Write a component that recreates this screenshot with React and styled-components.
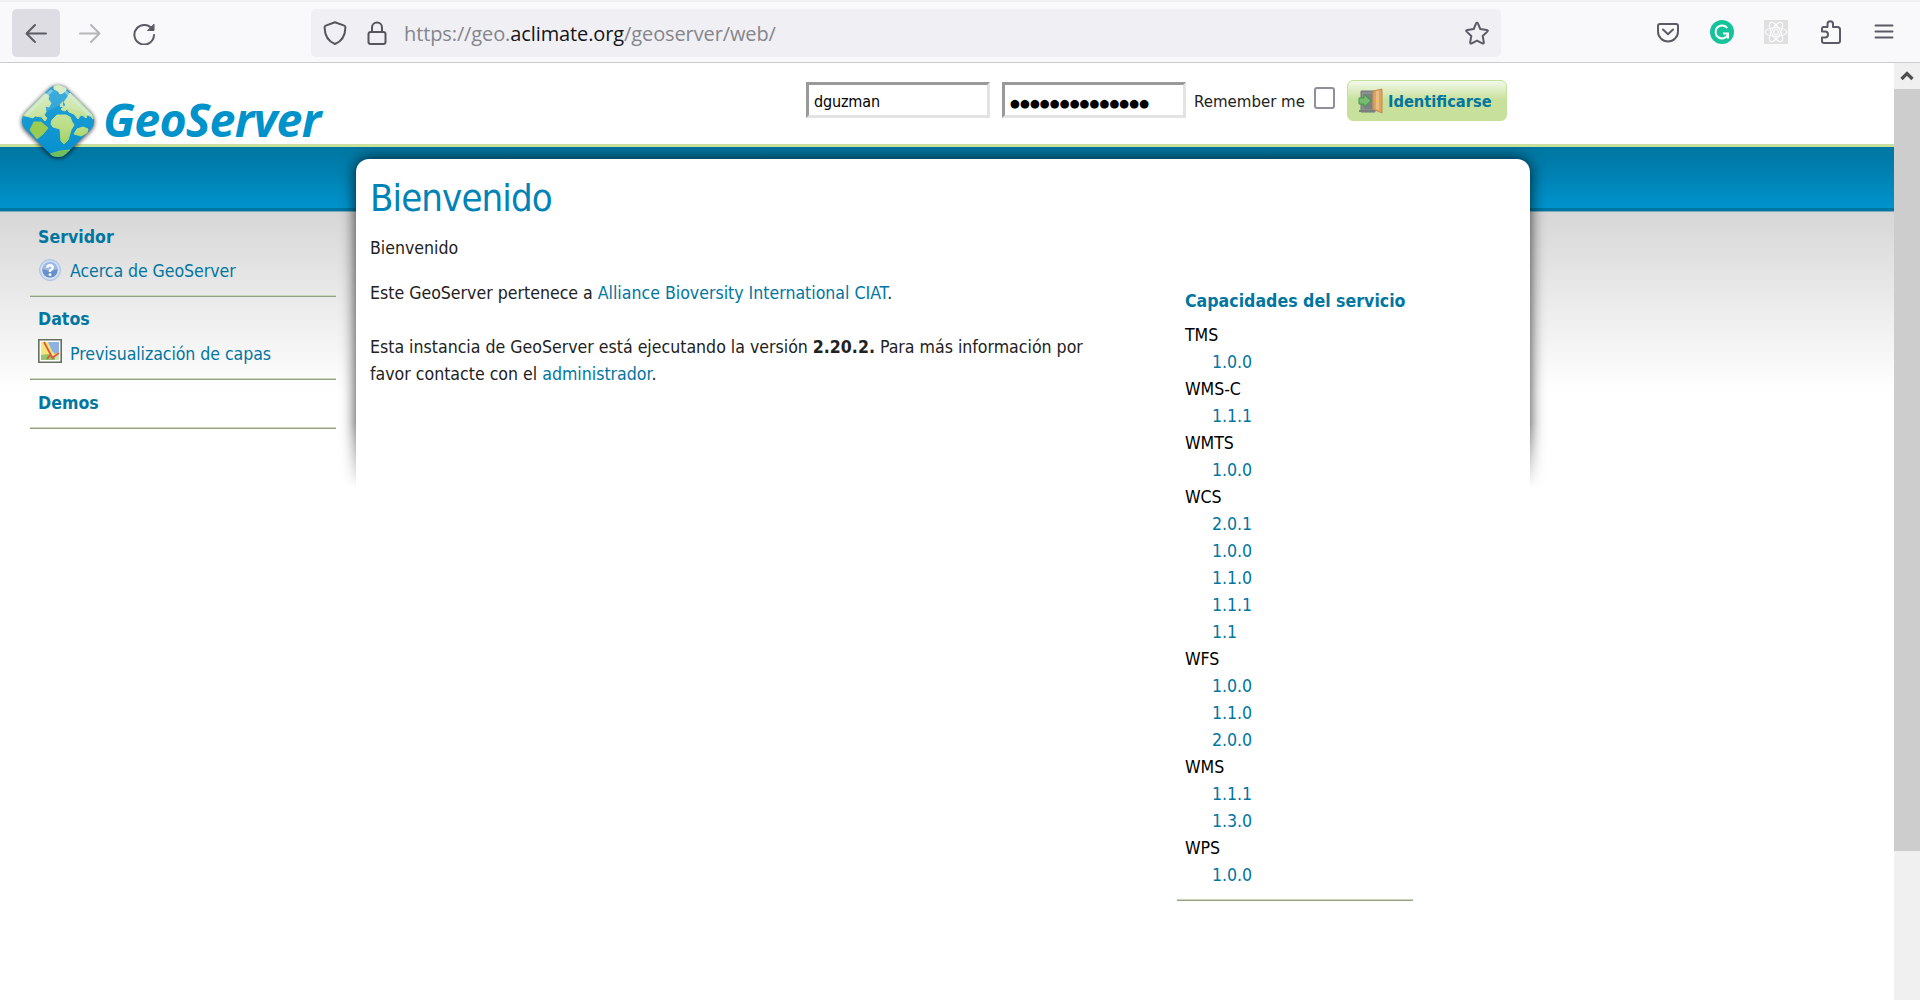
import React from 'react';
import styled, { createGlobalStyle } from 'styled-components';

const tahoma = "'DejaVu Sans Condensed', 'DejaVu Sans', sans-serif";

const GlobalStyle = createGlobalStyle`
  * { box-sizing: border-box; }
  body { margin: 0; background: #fff; overflow: hidden; }
`;

const Window = styled.div`
  width: 1920px;
  height: 1000px;
  display: flex;
  flex-direction: column;
  overflow: hidden;
  font: 17.6px/27px ${tahoma};
  letter-spacing: -0.07px;
  color: #222;
`;

/* ---------- browser toolbar ---------- */

const BrowserBar = styled.div`
  flex: none;
  height: 63px;
  display: flex;
  align-items: center;
  padding: 1px 24px 0 12px;
  background: #f9f9fb;
  border-top: 2px solid #f0f0f2;
  border-bottom: 1px solid #cccccf;
`;

const NavButtons = styled.div`
  width: 299px;
  display: flex;
  align-items: center;
`;

const NavButton = styled.div`
  width: ${(p) => (p.$wide ? 48 : 54)}px;
  height: 48px;
  margin-right: ${(p) => (p.$wide ? 3 : 0)}px;
  display: flex;
  align-items: center;
  justify-content: center;
  border-radius: 5px;
  background: ${(p) => (p.$active ? '#dddde3' : 'transparent')};
`;

const AddressBar = styled.div`
  width: 1190px;
  height: 48px;
  display: flex;
  align-items: center;
  padding: 0 12px;
  border-radius: 5px;
  background: #f0f0f4;
`;

const AddressIcon = styled.div`
  height: 24px;
  margin-right: 18px;
`;

const Address = styled.div`
  flex: 1;
  margin-left: -3px;
  font: 20px/30px 'Open Sans', 'Noto Sans', sans-serif;
  letter-spacing: -0.11px;
  color: #85858b;
  padding-top: 3px;
`;

const Domain = styled.span`
  color: #15141a;
`;

const Extensions = styled.div`
  margin-left: auto;
  height: 26px;
  display: flex;
  gap: 30px;
`;

/* ---------- page ---------- */

const Viewport = styled.div`
  flex: 1;
  min-height: 0;
  display: flex;
`;

const Page = styled.div`
  flex: 1;
  display: flex;
  flex-direction: column;
`;

const Header = styled.header`
  position: relative;
  z-index: 2;
  flex: none;
  height: 81px;
  display: flex;
  align-items: flex-start;
  background: #fff;
`;

const Brand = styled.div`
  width: 806px;
  height: 105px;
  display: flex;
  align-items: flex-start;
  padding: 9px 0 0 10px;
`;

const BrandName = styled.div`
  margin: 15px 0 0 -7px;
  font: italic 700 46.5px/64px 'Open Sans', 'Noto Sans', sans-serif;
  letter-spacing: -0.8px;
  color: #0092ca;
`;

const LoginForm = styled.div`
  display: flex;
  align-items: center;
  margin-top: 17px;
  height: 41px;
  font-size: 16px;
  letter-spacing: 0;
`;

const Field = styled.div`
  width: 184px;
  height: 36px;
  margin: 0 ${(p) => p.$gap}px 1px 0;
  padding: 2px 5px 0;
  border: 3px solid;
  border-color: #999 #e3e3e3 #e3e3e3 #999;
  line-height: 30px;
  letter-spacing: -0.15px;
  color: #000;
`;

const Dots = styled.span`
  font: 11.4px/28px 'DejaVu Sans', sans-serif;
  letter-spacing: 0;
`;

const RememberLabel = styled.span`
  width: 120px;
  padding-top: 1px;
  font-size: 16.7px;
`;

const Checkbox = styled.div`
  width: 21px;
  height: 22px;
  margin: 0 12px 5px 0;
  border: 2px solid #8f8f9d;
  border-radius: 3px;
`;

const LoginButton = styled.div`
  width: 160px;
  height: 41px;
  display: flex;
  align-items: center;
  gap: 5px;
  padding: 1px 0 0 10px;
  border: 1px solid #c5e09b;
  border-radius: 6px;
  background: linear-gradient(#f3f9e9 0, #c7e09b 19px);
  color: #0076a1;
  font-weight: 700;
  font-size: 16.3px;
  white-space: nowrap;
`;

const Main = styled.main`
  flex: 1;
  display: flex;
  border-top: 3px solid #c7e09b;
  background:
    linear-gradient(#0076a1 0, #0080b0 25px, #0092ca 58px, #0092ca 61px, #0076a1 61px, #0076a1 64px, #76abc0 64px, #76abc0 65px) 0 0 / 100% 65px no-repeat,
    linear-gradient(#d7d7d7, #fff 180px) 0 65px no-repeat,
    #fff;
`;

const Sidebar = styled.nav`
  flex: none;
  width: 356px;
  padding: 76px 20px 0 30px;
`;

const Section = styled.section`
  height: ${(p) => p.$height}px;
  margin-bottom: ${(p) => p.$gap || 0}px;
  padding: 1px 8px 0;
  border-bottom: 1px solid #949e88;
  box-shadow: inset 0 -1px 0 #cbd6b6;
`;

const SectionTitle = styled.div`
  height: ${(p) => p.$height || 34}px;
  font-weight: 700;
  color: #0076a1;
  letter-spacing: 0;
  white-space: nowrap;
`;

const MenuLink = styled.div`
  display: flex;
  gap: 8px;
  color: #0076a1;
`;

const MenuIcon = styled.span`
  width: 24px;
  height: 24px;
  margin-top: ${(p) => p.$lift}px;
`;

const Panel = styled.section`
  position: relative;
  width: 1174px;
  margin-top: 12px;
  padding: 16px 14px;
  display: flex;
  flex-direction: column;
`;

const PanelShade = styled.div`
  position: absolute;
  z-index: 0;
  inset: -12px -24px auto;
  height: 345px;
  padding: 12px 24px 0;
  overflow: hidden;
  -webkit-mask-image: linear-gradient(#000 80%, transparent 99%);
  mask-image: linear-gradient(#000 80%, transparent 99%);

  &::before {
    content: '';
    display: block;
    height: 440px;
    border-radius: 13px;
    box-shadow: 0 0 15px rgba(0, 0, 0, 0.8);
    background: #fff;
  }
`;

const Title = styled.h1`
  position: relative;
  margin: 0 0 14px;
  font-weight: 400;
  font-size: 38px;
  line-height: 46px;
  letter-spacing: -0.9px;
  color: #0083b7;
`;

const Columns = styled.div`
  position: relative;
  display: flex;
`;

const Article = styled.div`
  width: 740px;
  margin-right: 67px;
  letter-spacing: -0.01px;
`;

const Paragraph = styled.p`
  margin: 0 0 ${(p) => p.$gap || 0}px;
`;

const Link = styled.span`
  color: #0076a1;
`;

const Services = styled.aside`
  width: 236px;
  height: 613px;
  margin-top: 53px;
  padding: 0 8px;
  color: #000;
  border-bottom: 1px solid #949e88;
  box-shadow: inset 0 -1px 0 #cbd6b6;
`;

const Version = styled.div`
  padding-left: 27px;
  color: #0076a1;
`;

/* ---------- scrollbar ---------- */

const Scrollbar = styled.div`
  flex: none;
  width: 26px;
  background: #f0f0f0;
`;

const ScrollArrow = styled.div`
  height: 26px;
  display: flex;
  align-items: center;
  justify-content: center;
`;

const ScrollThumb = styled.div`
  height: 762px;
  background: #cdcdcd;
`;

/* ---------- drawings ---------- */

const Icon = ({ children, color = '#5b5b66', w = 2, size = 24 }) => (
  <svg width={size} height={size} viewBox="0 0 24 24" fill="none" stroke={color} strokeWidth={w} strokeLinecap="round" strokeLinejoin="round" display="block">
    {children}
  </svg>
);

const Globe = () => (
  <svg width="100" height="96" viewBox="0 0 100 96">
    <defs>
      <linearGradient id="sea" x1="0" y1="0" x2="0" y2="1">
        <stop offset="0" stopColor="#2aa5da" />
        <stop offset="1" stopColor="#008dcb" />
      </linearGradient>
      <linearGradient id="land" x1="0" y1="13" x2="0" y2="85" gradientUnits="userSpaceOnUse">
        <stop offset="0" stopColor="#d9ecc4" />
        <stop offset="0.6" stopColor="#b9dc84" />
        <stop offset="0.8" stopColor="#a5d263" />
        <stop offset="1" stopColor="#63b960" />
      </linearGradient>
      <clipPath id="tile">
        <rect x="19" y="20" width="58" height="58" rx="12" transform="rotate(45 48 49)" />
      </clipPath>
      <filter id="soft" x="-30%" y="-30%" width="160%" height="160%">
        <feGaussianBlur stdDeviation="2" />
      </filter>
    </defs>
    <rect x="18.5" y="20.5" width="59" height="59" rx="13" transform="rotate(45 48 50)" fill="#000" opacity="0.7" filter="url(#soft)" />
    <g clipPath="url(#tile)">
      <rect width="100" height="96" fill="url(#sea)" />
      <g fill="url(#land)" stroke="url(#land)" strokeWidth="1" strokeLinejoin="round">
        <path d="M44 12H57L56 18L53 21L50 22L48 19L44 17Z" />
        <path d="M10 43L34 21L39 24L38 27L41 31L39 35L35 34L36 40L34 43L37 46L35 49L33 47L32 45L25 44L23 46L16 44Z" />
        <path d="M24 50L31 50L38 56L33 62L27 67L20 58Z" fill="#9ccb52" stroke="#9ccb52" />
        <path d="M42 48L47 43L56 43L60 45L62 50L64 53L61 58L58 68L54 72L51 69L50 57L43 55L41 52Z" />
        <path d="M57 26L60 21L86 43L83 47L80 43L77 43L76 46L72 43L70 44L68 47L64 42L59 40L57 37L55 39L52 38L51 37L56 33L54 30Z" />
        <path d="M64 62L67 57L73 55L78 57L77 61L71 64Z" />
        <path d="M40 82L50 79L60 78L55 86H43Z" fill="#6fbf5c" />
      </g>
      <path d="M48 13L84 47L66 38L48 34L28 44L14 45Z" fill="#fff" opacity="0.12" />
      <path d="M16 43L42 18M54 18L81 44" stroke="#d7f1ef" strokeWidth="3" opacity="0.5" />
      <path d="M50 32L53 29L53 33L54 35L50 35Z" fill="#bde0bc" />
    </g>
  </svg>
);

const DoorIcon = () => (
  <svg width="25" height="26" viewBox="0 0 25 26">
    <path d="M3 24V3H17V24Z" fill="#8b8f8e" stroke="#737776" />
    <path d="M1 22H17V24H1Z" fill="#7b807f" />
    <path d="M6 6H14V21H6Z" fill="#7d8180" />
    <path d="M15 3L24 1V25L15 21Z" fill="#dba45f" stroke="#c48a4e" />
    <path d="M18 3L21 2.5V22L18 21Z" fill="#e9bd85" />
    <circle cx="19.5" cy="13" r="1.3" fill="#f3c642" />
    <path d="M1 10H6V6.5L13 12.8L6 19V16H1Z" fill="#77bd70" stroke="#43964b" />
  </svg>
);

const HelpIcon = () => (
  <svg width="24" height="24" viewBox="0 0 24 24">
    <circle cx="12" cy="12" r="10.5" fill="#c9dbf0" stroke="#a8c1e3" />
    <circle cx="12" cy="12" r="8.2" fill="#6990cb" stroke="#fff" strokeOpacity="0.65" />
    <path d="M4.5 11A7.5 7.5 0 0 1 19.5 11Q12 14 4.5 11Z" fill="#a7c2e8" opacity="0.8" />
    <path d="M9.3 9.8Q9.3 7.3 12 7.3T14.7 9.6Q14.7 11.2 12 12.5V14" fill="none" stroke="#fff" strokeWidth="2.4" />
    <circle cx="12" cy="16.7" r="1.4" fill="#fff" />
  </svg>
);

const MapIcon = () => (
  <svg width="24" height="24" viewBox="0 0 24 24">
    <path d="M.8 .8H23.2V23.2H.8Z" fill="#fff" stroke="#63705f" strokeWidth="1.6" />
    <path d="M3 3H21V21H3Z" fill="#f3e67d" />
    <path d="M10 3H21V14L17 15L14 12Z" fill="#8fb0e5" />
    <path d="M3 16L10 15L15 18L21 13V21H3Z" fill="#93c66b" />
    <path d="M17 15L21 13V21H17Z" fill="#cfe0b4" />
    <path d="M6 3L15 20M14 19L21 14M12 16L9 20" stroke="#e2573c" strokeWidth="1.8" fill="none" />
  </svg>
);

const services = [
  ['TMS', ['1.0.0']],
  ['WMS-C', ['1.1.1']],
  ['WMTS', ['1.0.0']],
  ['WCS', ['2.0.1', '1.0.0', '1.1.0', '1.1.1', '1.1']],
  ['WFS', ['1.0.0', '1.1.0', '2.0.0']],
  ['WMS', ['1.1.1', '1.3.0']],
  ['WPS', ['1.0.0']],
];

export default function App() {
  return (
    <Window>
      <GlobalStyle />
      <BrowserBar>
        <NavButtons>
          <NavButton $wide $active>
            <Icon><path d="M2.5 12.5H22M11 4L2.5 12.5L11 21" /></Icon>
          </NavButton>
          <NavButton>
            <Icon color="#b5b5bc"><path d="M2 12.5H21.5M13 4L21.5 12.5L13 21" /></Icon>
          </NavButton>
          <NavButton>
            <Icon>
              <path d="M20.8 9A9.8 9.8 0 1 0 22 14" />
              <path d="M22 3.5V9.5H16Z" fill="#5b5b66" strokeWidth="1" />
            </Icon>
          </NavButton>
        </NavButtons>
        <AddressBar>
          <AddressIcon>
            <Icon color="#55555e"><path d="M12 1.2L21.3 4.6Q22.5 5 22.4 6.5C22.2 14 18.5 20.5 12 23C5.5 20.5 1.8 14 1.6 6.5Q1.5 5 2.7 4.6Z" /></Icon>
          </AddressIcon>
          <AddressIcon>
            <Icon color="#55555e">
              <rect x="3.5" y="11" width="17" height="12" rx="2.2" />
              <path d="M7 11V6.5A5 5 0 0 1 17 6.500V11" />
            </Icon>
          </AddressIcon>
          <Address>https://geo.<Domain>aclimate.org</Domain>/geoserver/web/</Address>
          <Icon><path d="M12 1.8Q12.7 1.8 13 2.6L15.3 8L21.7 8.9Q23.6 9.3 22.3 10.6L17.7 15L18.8 21.2Q19 23 17.3 22.3L12 19.6L6.7 22.3Q5 23 5.2 21.2L6.3 15L1.7 10.6Q.4 9.300 2.300 8.900L8.700 8L11 2.600Q11.300 1.800 12 1.800Z" /></Icon>
        </AddressBar>
        <Extensions>
          <Icon>
            <path d="M4 4H20Q22 4 22 6V11.5A10 10 0 0 1 2 11.5V6Q2 4 4 4Z" />
            <path d="M7 9.5L12 14.3L17 9.5" />
          </Icon>
          <Icon color="#fff">
            <circle cx="12" cy="12" r="12" fill="#15c39a" stroke="none" />
            <path d="M17.3 8A6.5 6.5 0 1 0 17.8 15M18 18.5V13.5H13" strokeLinecap="butt" strokeLinejoin="miter" />
          </Icon>
          <Icon color="#fff" w={1}>
            <rect width="24" height="24" rx="1" fill="#e0e0e1" stroke="none" />
            <ellipse cx="12" cy="12" rx="11" ry="4.3" />
            <ellipse cx="12" cy="12" rx="11" ry="4.3" transform="rotate(60 12 12)" />
            <ellipse cx="12" cy="12" rx="11" ry="4.3" transform="rotate(120 12 12)" />
            <circle cx="12" cy="12" r="2.5" />
          </Icon>
          <Icon><path d="M5 7H9.500V4A2.500 2.500 0 0 1 15 4V7H19.500Q22 7 22 9.500V20.500Q22 23 20 23H6Q4 23 4 21V17.500H7A2.800 2.800 0 0 0 7 11.500H4V9Q4 7 5.500 7Z" /></Icon>
          <Icon><path d="M3.5 5.5H20.5M3.5 11.5H20.5M3.5 17.5H20.5" /></Icon>
        </Extensions>
      </BrowserBar>

      <Viewport>
        <Page>
          <Header>
            <Brand>
              <Globe />
              <BrandName>GeoServer</BrandName>
            </Brand>
            <LoginForm>
              <Field $gap={12}>dguzman</Field>
              <Field $gap={8}><Dots>●●●●●●●●●●●●●●</Dots></Field>
              <RememberLabel>Remember me</RememberLabel>
              <Checkbox />
              <LoginButton><DoorIcon />Identificarse</LoginButton>
            </LoginForm>
          </Header>

          <Main>
            <Sidebar>
              <Section $height={74} $gap={8}>
                <SectionTitle>Servidor</SectionTitle>
                <MenuLink><MenuIcon $lift={0}><HelpIcon /></MenuIcon>Acerca de GeoServer</MenuLink>
              </Section>
              <Section $height={75} $gap={9}>
                <SectionTitle $height={35}>Datos</SectionTitle>
                <MenuLink><MenuIcon $lift={-2}><MapIcon /></MenuIcon>Previsualización de capas</MenuLink>
              </Section>
              <Section $height={40}>
                <SectionTitle>Demos</SectionTitle>
              </Section>
            </Sidebar>

            <Panel>
              <PanelShade />
              <Title>Bienvenido</Title>
              <Columns>
                <Article>
                  <Paragraph $gap={18}>Bienvenido</Paragraph>
                  <Paragraph $gap={27}>Este GeoServer pertenece a <Link>Alliance Bioversity International CIAT</Link>.</Paragraph>
                  <Paragraph>
                    Esta instancia de GeoServer está ejecutando la versión <b>2.20.2.</b> Para más información por favor contacte con el <Link>administrador</Link>.
                  </Paragraph>
                </Article>
                <Services>
                  <SectionTitle>Capacidades del servicio</SectionTitle>
                  {services.map(([name, versions]) => (
                    <React.Fragment key={name}>
                      <div>{name}</div>
                      {versions.map((v) => <Version key={v}>{v}</Version>)}
                    </React.Fragment>
                  ))}
                </Services>
              </Columns>
            </Panel>
          </Main>
        </Page>

        <Scrollbar>
          <ScrollArrow>
            <svg width="14" height="12" viewBox="0 0 14 12"><path d="M1.5 9L7 3.5L12.5 9" fill="none" stroke="#505050" strokeWidth="3.2" /></svg>
          </ScrollArrow>
          <ScrollThumb />
        </Scrollbar>
      </Viewport>
    </Window>
  );
}
